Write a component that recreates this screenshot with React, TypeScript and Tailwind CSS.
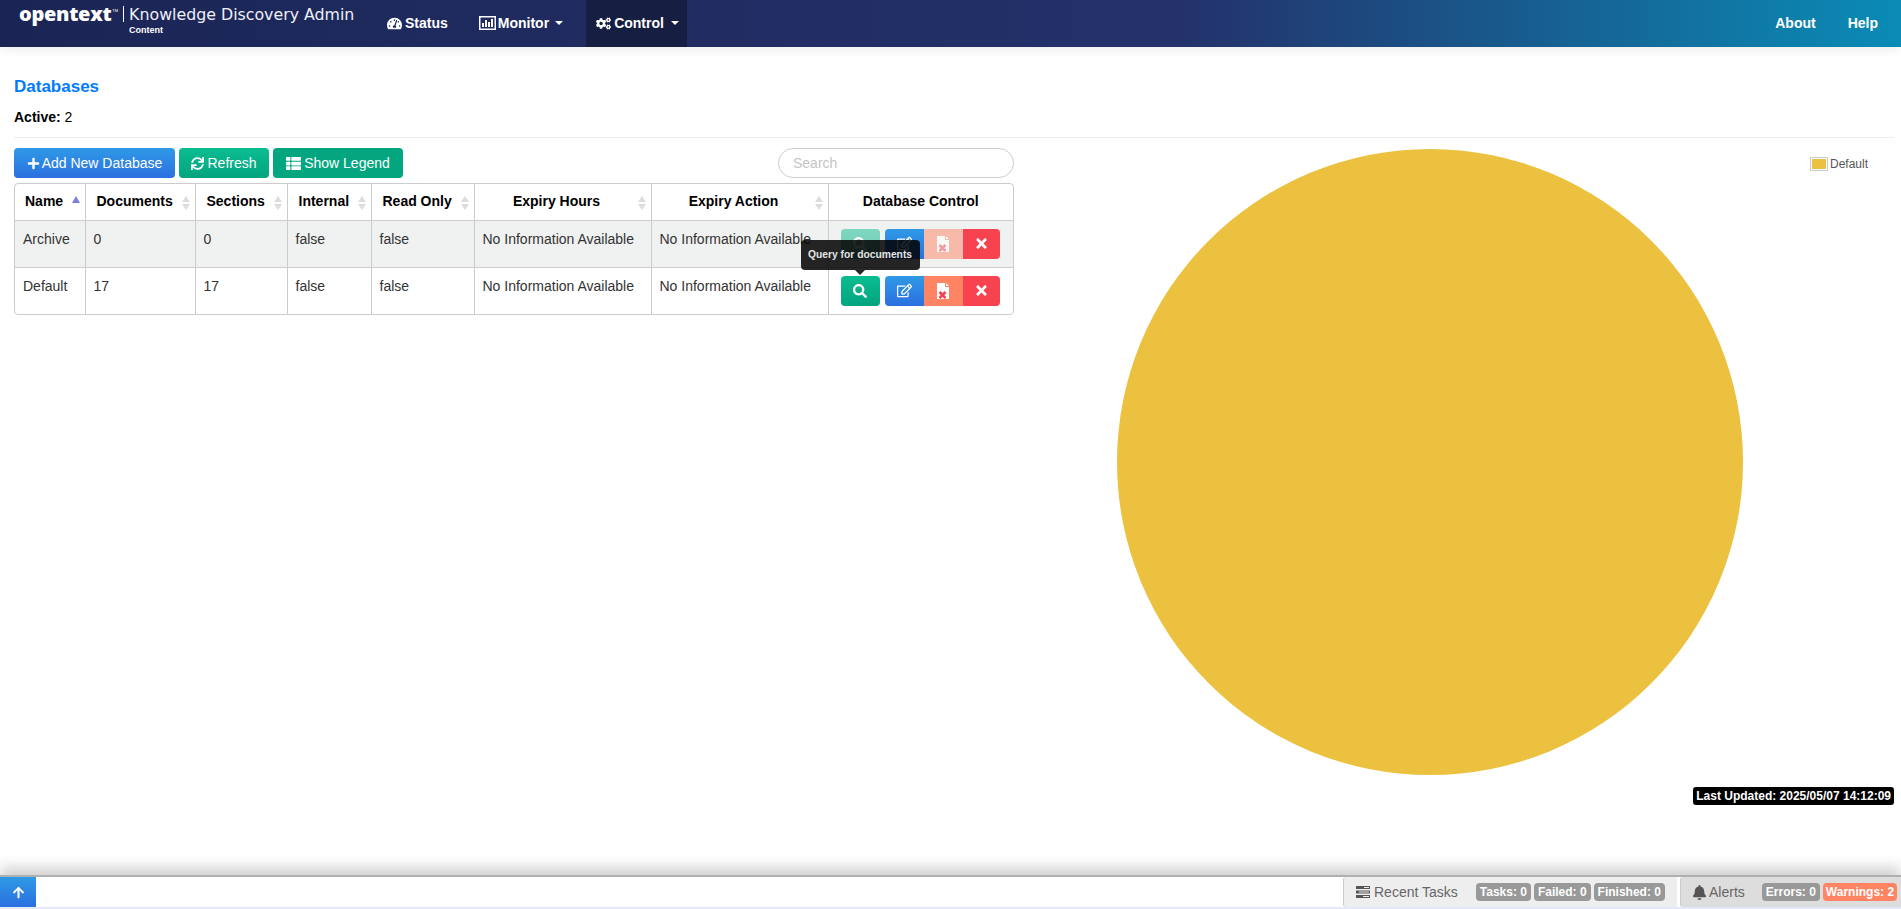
import { FaArrowUp, FaBell, FaCogs, FaPlus, FaSearch, FaRegEdit, FaSync, FaTachometerAlt, FaThList, FaTimes } from "react-icons/fa";

const headers = [
  { label: "Name", sort: "asc", left: true },
  { label: "Documents", sort: "both", left: true },
  { label: "Sections", sort: "both", left: true },
  { label: "Internal", sort: "both", left: true },
  { label: "Read Only", sort: "both", left: true },
  { label: "Expiry Hours", sort: "both" },
  { label: "Expiry Action", sort: "both" },
  { label: "Database Control", sort: "none" },
];

const rows = [
  { name: "Archive", documents: "0", sections: "0", disabled: true },
  { name: "Default", documents: "17", sections: "17", disabled: false },
];

function Caret() {
  return <span className="ml-[4px] inline-block border-x-[4px] border-t-[4px] border-x-transparent border-t-white align-middle" />;
}

function SortIcon({ sort }: { sort: string }) {
  if (sort === "none") return null;
  if (sort === "asc") {
    return (
      <span className="absolute right-[5px] top-[12px] border-x-[4px] border-b-[7px] border-x-transparent border-b-[#7d7fdc]" />
    );
  }
  return (
    <span className="absolute right-[5px] top-[12px] flex flex-col gap-[2px]">
      <span className="border-x-[4px] border-b-[6px] border-x-transparent border-b-[#dcdcdc]" />
      <span className="border-x-[4px] border-t-[6px] border-x-transparent border-t-[#dcdcdc]" />
    </span>
  );
}

function MonitorIcon() {
  return (
    <svg width="17" height="14" viewBox="0 0 17 14" fill="#fff">
      <path d="M0 0h17v14H0z M1.500 1.500v11h14v-11z" fillRule="evenodd" />
      <path d="M3 7h2v4H3z M6 4h2v7H6z M9 6h2v5H9z M12 3h2v8h-2z" />
    </svg>
  );
}

function FileX() {
  return (
    <svg width="14" height="16" viewBox="0 0 14 16">
      <path d="M1 0h8v4h4v12H1z M10 0l3 3h-3z" fill="#fff" />
      <path d="M3.500 9l6 6M9.500 9l-6 6" stroke="#f7434f" strokeWidth="2.6" />
    </svg>
  );
}

function TaskIcon() {
  return (
    <svg width="14" height="12" viewBox="0 0 14 12" fill="#555">
      <path d="M0 0h14v3H0z M0 4.500h14v3H0z M0 9h14v3H0z" />
      <path d="M8 1h5v1H8z M3 5.500h10v1H3z M7 10h6v1H7z" fill="#eee" />
    </svg>
  );
}

function Badge({ children, warn }: { children: string; warn?: boolean }) {
  return (
    <span className={`flex h-[18px] shrink-0 items-center rounded-[4px] text-[12px] font-bold whitespace-nowrap text-white ${warn ? "bg-[#ff8464] px-[3px]" : "bg-[#999999] px-[4px]"}`}>
      {children}
    </span>
  );
}

export default function App() {
  return (
    <div className="flex h-[909px] flex-col overflow-hidden bg-white font-['Liberation_Sans',Arial,sans-serif] text-[14px] text-[#333]">
      <nav className="z-10 flex h-[47px] shrink-0 items-stretch bg-[linear-gradient(90deg,#1b2555_0%,#24316b_62%,#0a8cb6_100%)] font-bold text-white shadow-[0_3px_10px_rgba(0,0,0,0.07)]">
        <div className="relative w-[373px] shrink-0">
          <div className="flex items-start pl-[19px] pt-[4px]">
            <span className="-mt-[2px] font-['Open_Sans',sans-serif] text-[20px] leading-[24px] font-extrabold tracking-[-0.3px]">opentext</span>
            <span className="mt-[4px] ml-px text-[4px] leading-[5px] font-normal">TM</span>
            <span className="mx-[5px] mt-[2px] h-[16px] w-px bg-white" />
            <div className="flex flex-col">
              <span className="font-['DejaVu_Sans',sans-serif] text-[15.800px] leading-[22px] font-normal whitespace-nowrap text-[#eef0f6]">Knowledge Discovery Admin</span>
              <span className="-mt-[1px] text-[9px] leading-[10px]">Content</span>
            </div>
          </div>
        </div>
        <a className="flex items-center gap-[3px] px-[14px] pb-[1px]"><FaTachometerAlt size={15} />Status</a>
        <a className="ml-[3px] flex items-center gap-[2px] px-[14px] pb-[1px]"><MonitorIcon />Monitor<Caret /></a>
        <a className="ml-[9px] flex items-center gap-[3px] bg-[#161e42] pb-[1px] pl-[10px] pr-[8px]"><FaCogs size={15} />Control<Caret /></a>
        <div className="ml-auto flex items-center gap-[32px] pb-[1px] pr-[23px]">
          <a>About</a>
          <a>Help</a>
        </div>
      </nav>

      <main className="min-h-0 flex-1 pl-[14px] pr-[7px]">
        <h4 className="mt-[30px] text-[17px] leading-[20px] font-bold text-[#007bff]">Databases</h4>
        <p className="mt-[10px] leading-[20px] text-black"><b>Active:</b> 2</p>
        <hr className="mt-[10px] border-[#eeeeee]" />

        <div className="mt-[10px] flex">
          <div className="w-[1000px] shrink-0">
            <div className="flex h-[30px] gap-[4px]">
              <button className="flex w-[161px] items-center justify-center gap-[2px] rounded-[4px] bg-[linear-gradient(#2f9ae6,#2b6fe0)] text-white"><FaPlus size={13} />Add New Database</button>
              <button className="flex w-[90px] items-center justify-center gap-[3px] rounded-[4px] bg-[linear-gradient(#0bbd92,#03a47e)] text-white"><FaSync size={13} />Refresh</button>
              <button className="flex w-[130px] items-center justify-center gap-[3px] rounded-[4px] bg-[#04a680] text-white"><FaThList size={15} />Show Legend</button>
              <div className="ml-auto flex h-[30px] w-[236px] items-center rounded-full border border-[#cccccc] px-[14px] text-[#c4c4c4]">Search</div>
            </div>

            <div className="mt-[5px] rounded-[4px] border border-[#cccccc]">
              <table className="w-[998px] table-fixed border-collapse">
                <colgroup>
                  <col className="w-[70px]" />
                  <col className="w-[110px]" />
                  <col className="w-[92px]" />
                  <col className="w-[84px]" />
                  <col className="w-[103px]" />
                  <col className="w-[177px]" />
                  <col className="w-[177px]" />
                  <col />
                </colgroup>
                <thead>
                  <tr className="h-[36px]">
                    {headers.map((header, index) => (
                      <th
                        key={index}
                        className={`relative border-l border-[#cccccc] font-bold whitespace-nowrap text-black first:border-l-0 ${
                          header.left ? "pl-[11px] text-left first:pl-[10px]" : "text-center"
                        } ${!header.left && header.sort === "both" ? "pl-[10px] pr-[22px]" : ""}`}>
                        {header.label}
                        <SortIcon sort={header.sort} />
                      </th>
                    ))}
                  </tr>
                </thead>
                <tbody>
                  {rows.map((row) => (
                    <tr key={row.name} className={`h-[47px] border-t border-[#cccccc] align-top ${row.disabled ? "bg-[#f0f2f1]" : ""}`}>
                      <td className="px-[8px] py-[8px]">{row.name}</td>
                      <td className="border-l border-[#cccccc] px-[8px] py-[8px]">{row.documents}</td>
                      <td className="border-l border-[#cccccc] px-[8px] py-[8px]">{row.sections}</td>
                      <td className="border-l border-[#cccccc] px-[8px] py-[8px]">false</td>
                      <td className="border-l border-[#cccccc] px-[8px] py-[8px]">false</td>
                      <td className="border-l border-[#cccccc] px-[8px] py-[8px] whitespace-nowrap">No Information Available</td>
                      <td className="border-l border-[#cccccc] px-[8px] py-[8px] whitespace-nowrap">No Information Available</td>
                      <td className="border-l border-[#cccccc] py-[8px] pl-[12px]">
                        <div className="flex h-[30px] text-white">
                          <div className="relative">
                            <button className={`flex h-[30px] w-[39px] items-center justify-center rounded-[4px] bg-[linear-gradient(#0bbd92,#03a47e)] ${row.disabled ? "opacity-50" : ""}`}>
                              <FaSearch size={14} />
                            </button>
                            {!row.disabled && (
                              <div className="absolute bottom-[36px] left-[-40px] z-10 flex h-[30px] w-[119px] items-center justify-center rounded-[4px] bg-[rgba(0,0,0,0.85)] text-[10.300px] font-bold whitespace-nowrap text-[#e4e4e4]">
                                Query for documents
                                <span className="absolute left-[54px] top-[30px] border-x-[5px] border-t-[5px] border-x-transparent border-t-[rgba(0,0,0,0.85)]" />
                              </div>
                            )}
                          </div>
                          <button className="ml-[5px] flex h-[30px] w-[39px] items-center justify-center rounded-l-[4px] bg-[linear-gradient(#2f9ae6,#2b6fe0)]"><FaRegEdit size={15} /></button>
                          <button className={`flex h-[30px] w-[39px] items-center justify-center bg-[#ff8464] ${row.disabled ? "opacity-50" : ""}`}><FileX /></button>
                          <button className="flex h-[30px] w-[37px] items-center justify-center rounded-r-[4px] bg-[#f7434f]"><FaTimes size={15} /></button>
                        </div>
                      </td>
                    </tr>
                  ))}
                </tbody>
              </table>
            </div>
          </div>

          <div className="relative h-[660px] flex-1">
            <svg className="ml-[103px] mt-[1px]" width="626" height="626" viewBox="0 0 626 626">
              <circle cx="313" cy="313" r="313" fill="#ecc13f" />
            </svg>
            <div className="absolute right-[26px] top-[7px] flex items-center gap-[2px] text-[12px] text-[#555]">
              <span className="h-[14px] w-[18px] border border-[#cccccc] p-px">
                <span className="block h-full w-full bg-[#ecc13f]" />
              </span>
              Default
            </div>
            <div className="absolute right-0 top-[639px] flex h-[18px] items-center rounded-[3px] bg-black px-[3px] text-[12px] font-bold text-white">
              Last Updated: 2025/05/07 14:12:09
            </div>
          </div>
        </div>
      </main>

      <footer className="z-10 flex h-[34px] shrink-0 items-stretch border-y-2 border-t-[#b0b0b0] border-b-[#e3eaf5] bg-white shadow-[0_-8px_14px_rgba(0,0,0,0.18)]">
        <button className="flex w-[36px] items-center justify-center bg-[linear-gradient(#2f9ae6,#2b6fe0)] text-white"><FaArrowUp size={13} /></button>
        <div className="ml-auto flex w-[334px] items-center rounded-l-[3px] border-l border-[#cccccc] bg-[#eeeeee] pl-[12px] text-[#666]">
          <TaskIcon />
          <span className="ml-[4px]">Recent Tasks</span>
          <div className="ml-[18px] flex gap-[3px]">
            <Badge>Tasks: 0</Badge>
            <Badge>Failed: 0</Badge>
            <Badge>Finished: 0</Badge>
          </div>
        </div>
        <div className="ml-[3px] flex w-[221px] items-center rounded-l-[3px] border-l border-[#cccccc] bg-[#dddddd] pl-[11px] text-[#666]">
          <FaBell size={15} className="text-[#555]" />
          <span className="ml-[2px]">Alerts</span>
          <div className="ml-[17px] flex gap-[3px]">
            <Badge>Errors: 0</Badge>
            <Badge warn>Warnings: 2</Badge>
          </div>
        </div>
      </footer>
    </div>
  );
}
